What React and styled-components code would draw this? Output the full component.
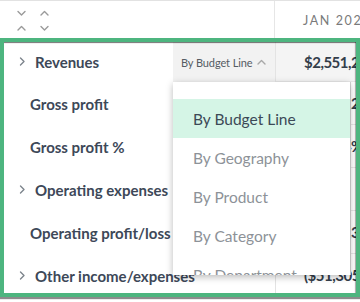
import React from 'react';
import styled, { createGlobalStyle } from 'styled-components';

const GlobalStyle = createGlobalStyle`
    html, body {
        margin: 0;
        padding: 0;
        background: #fff;
        overflow: hidden;
    }
    body {
        font-family: Lato, "Open Sans", "Liberation Sans", sans-serif;
    }
`

const rows = [
    { label: 'Revenues', value: '$2,551,224', expandable: true },
    { label: 'Gross profit', value: '$1,778,242' },
    { label: 'Gross profit %', value: '69.70.4%' },
    { label: 'Operating expenses', value: '($8,41)', expandable: true },
    { label: 'Operating profit/loss', value: '$1,096,3' },
    { label: 'Other income/expenses', value: '($51,305)', expandable: true },
]

const options = ['By Budget Line', 'By Geography', 'By Product', 'By Category', 'By Department']

function Chevron({ dir }) {
    const d = {
        up: 'M1 5 L4.5 1.5 L8 5',
        down: 'M1 1.5 L4.5 5 L8 1.5',
        right: 'M1.5 1 L5 4.5 L1.5 8',
    }[dir]
    const size = dir === 'right' ? [7, 10] : [9, 6.5]
    return (
        <svg width={size[0]} height={size[1]} viewBox={`0 0 ${size[0]} ${size[1]}`}>
            <path d={d} fill="none" stroke="currentColor" strokeWidth="1.4" strokeLinecap="round" strokeLinejoin="round" />
        </svg>
    )
}

function App() {
    return (
        <Page>
            <GlobalStyle />
            <Header>
                <SortCell>
                    <SortPair>
                        <Chevron dir="down" />
                        <Chevron dir="up" />
                    </SortPair>
                    <SortPair>
                        <Chevron dir="up" />
                        <Chevron dir="down" />
                    </SortPair>
                </SortCell>
                <Month>JAN 2024</Month>
            </Header>
            <Frame>
                {rows.map((row, i) => (
                    <Row key={row.label} $first={i === 0}>
                        <Label $indent={!row.expandable}>
                            {row.expandable && <Caret><Chevron dir="right" /></Caret>}
                            {row.label}
                        </Label>
                        {i === 0 ? (
                            <Trigger>
                                By Budget Line
                                <TriggerIcon><Chevron dir="up" /></TriggerIcon>
                            </Trigger>
                        ) : (
                            <Blank />
                        )}
                        <Value $first={i === 0}>{row.value}</Value>
                    </Row>
                ))}
                <Menu>
                    {options.map((o, i) => (
                        <Option key={o} $active={i === 0}>{o}</Option>
                    ))}
                </Menu>
            </Frame>
        </Page>
    )
}

export default App;

const Page = styled.div`
    width: 360px;
    height: 302px;
    overflow: hidden;
`

const Header = styled.div`
    display: grid;
    grid-template-columns: 275px 1fr;
    height: 37px;
    border-top: 1px solid #e2e2e2;
`

const SortCell = styled.div`
    display: flex;
    align-items: center;
    gap: 14px;
    padding-left: 17px;
    border-right: 1px solid #e6e6e6;
    color: #9a9a9a;
`

const SortPair = styled.div`
    display: flex;
    flex-direction: column;
    gap: 8px;
    margin-top: 2px;
`

const Month = styled.div`
    display: flex;
    align-items: center;
    padding-left: 28px;
    font-size: 12.5px;
    letter-spacing: 1.6px;
    color: #7a7a7a;
    white-space: nowrap;
    margin-top: 1px;
`

const Frame = styled.div`
    position: relative;
    height: 251px;
    border: 4px solid #4db57f;
    overflow: hidden;
    box-shadow: 0 2px 1px rgba(0, 0, 0, 0.45);
    &::after {
        content: '';
        position: absolute;
        inset: 0;
        pointer-events: none;
        box-shadow: inset 0 2px 1px -1px rgba(0, 0, 0, 0.55), inset -2px 0 1px -1px rgba(0, 0, 0, 0.35);
    }
`

const Row = styled.div`
    display: grid;
    grid-template-columns: 169px 102px 1fr;
    height: ${p => (p.$first ? '40px' : '43px')};
`

const Label = styled.div`
    display: flex;
    align-items: center;
    padding-left: ${p => (p.$indent ? '26px' : '15px')};
    font-size: 15px;
    font-weight: 700;
    color: #3d4858;
    white-space: nowrap;
`

const Caret = styled.span`
    display: flex;
    color: #7d848c;
    margin-right: 9px;
`

const Trigger = styled.div`
    display: flex;
    align-items: center;
    justify-content: space-between;
    padding: 0 9px 0 8px;
    background: #f2f2f2;
    font-size: 11px;
    letter-spacing: -0.1px;
    color: #555c63;
    white-space: nowrap;
`

const TriggerIcon = styled.span`
    display: flex;
    color: #a8a8a8;
`

const Blank = styled.div``

const Value = styled.div`
    display: flex;
    align-items: center;
    padding-left: 28px;
    border-left: 1px solid #e3e3e3;
    border-bottom: 1px solid #e8e8e8;
    background: ${p => (p.$first ? '#f4f4f4' : '#fff')};
    font-size: 15px;
    font-weight: 700;
    letter-spacing: -0.5px;
    color: #343e4b;
    white-space: nowrap;
`

const Menu = styled.div`
    position: absolute;
    top: 40px;
    left: 169px;
    width: 177px;
    height: 193px;
    padding-top: 17px;
    box-sizing: border-box;
    background: #fff;
    overflow: hidden;
    box-shadow: 0 2px 7px rgba(0, 0, 0, 0.28), 1px 0 0 #d6d6d6;
    z-index: 1;
`

const Option = styled.div`
    display: flex;
    align-items: center;
    height: 39px;
    padding-left: 20px;
    font-size: 15.5px;
    color: ${p => (p.$active ? '#3c4956' : '#8d9298')};
    background: ${p => (p.$active ? '#d5f5e6' : 'transparent')};
    white-space: nowrap;
`
